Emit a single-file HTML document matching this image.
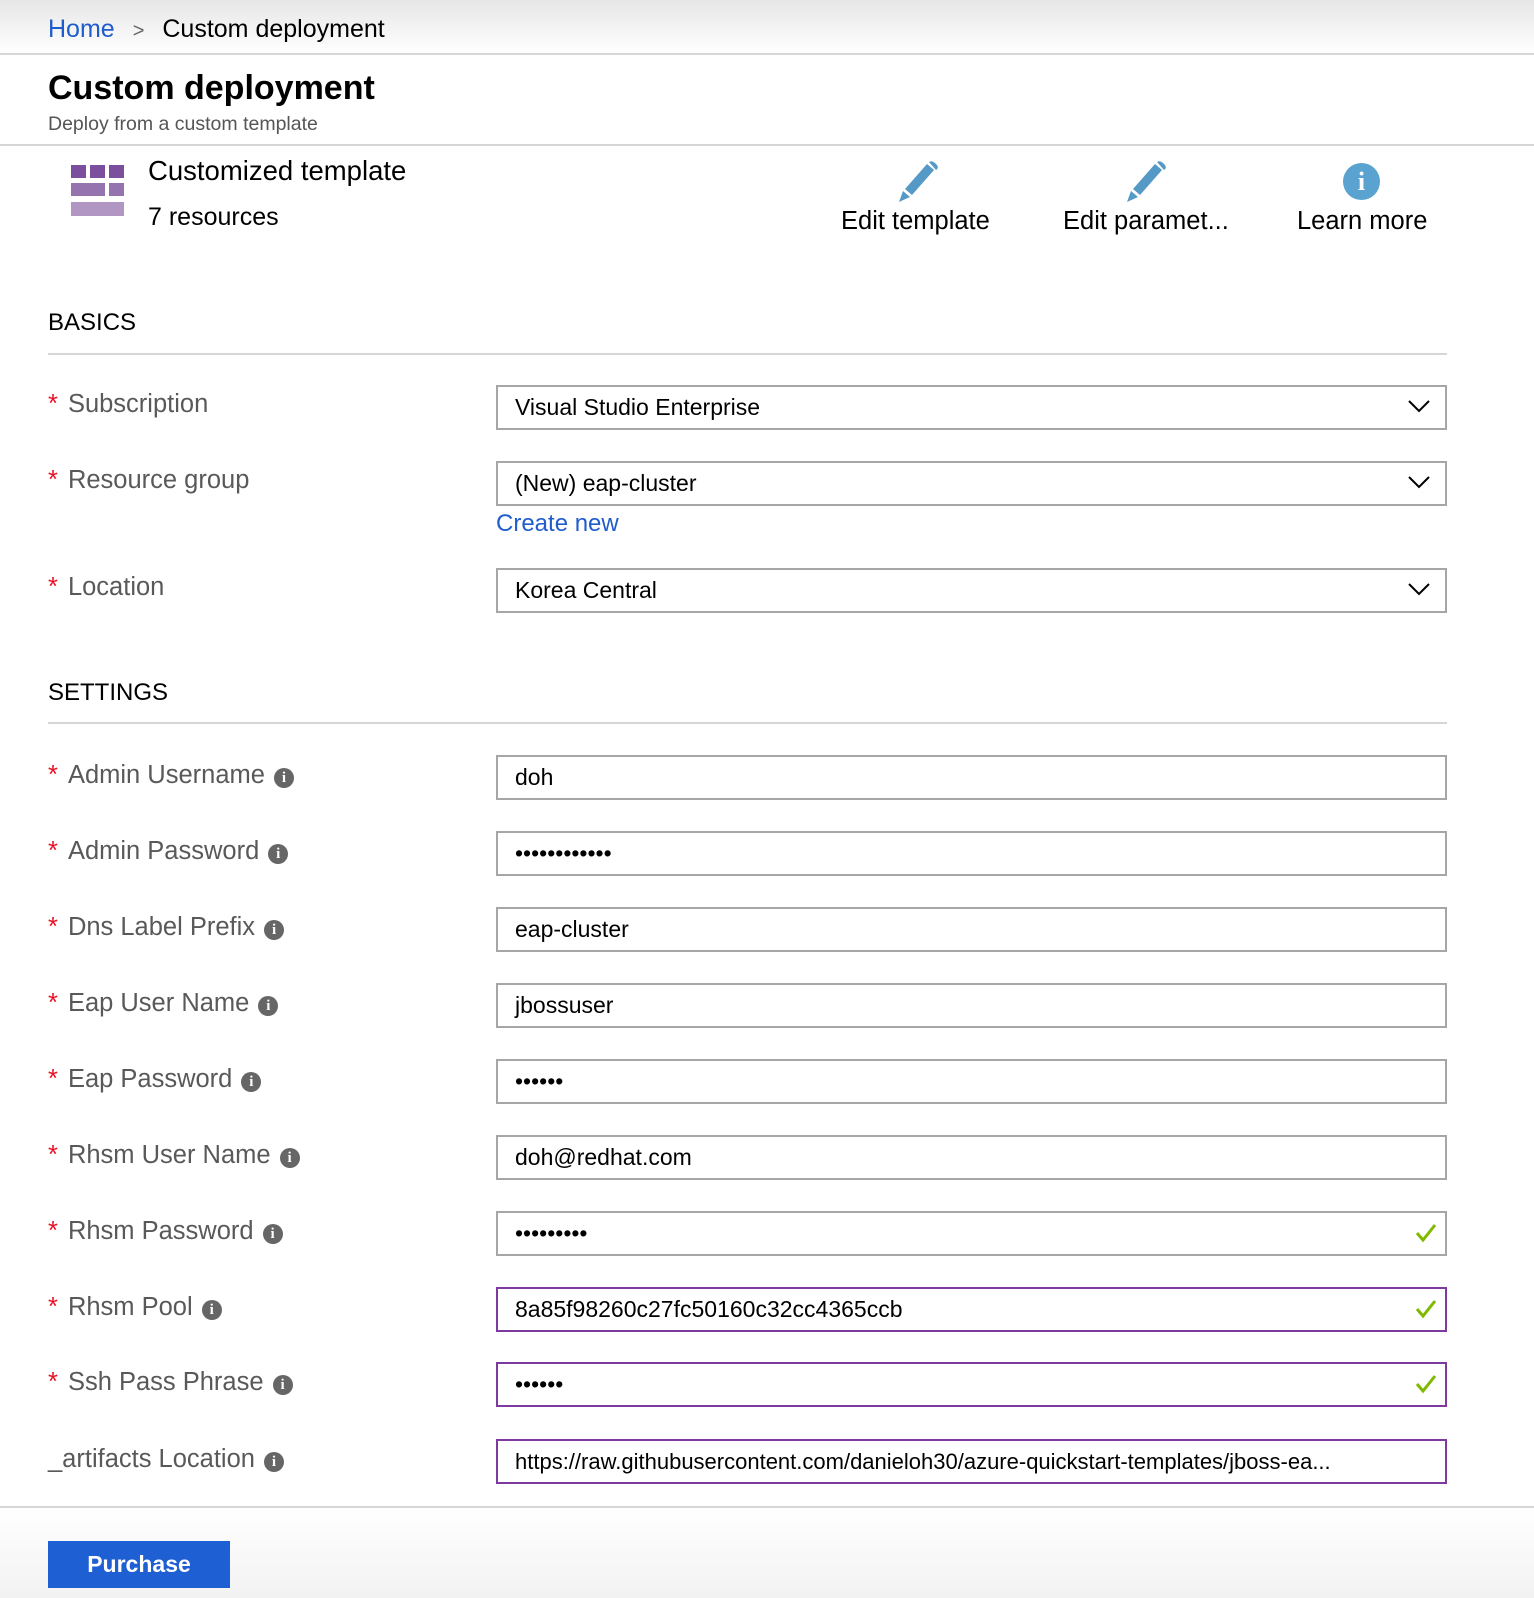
<!DOCTYPE html>
<html><head><meta charset="utf-8"><style>
*{margin:0;padding:0;box-sizing:border-box}
body{width:1534px;height:1598px;position:relative;background:#fff;font-family:"Liberation Sans",sans-serif;overflow:hidden;color:#000}
.a{position:absolute;white-space:nowrap}
.top{position:absolute;left:0;top:0;width:1534px;height:55px;background:linear-gradient(#e6e6e6,#fff);border-bottom:2px solid #d6d6d6}
.hr{position:absolute;height:2px;background:#d6d6d6}
.lbl{position:absolute;left:48px;font-size:25.5px;color:#595959;line-height:30px;white-space:nowrap}
.lbl .s{color:#e81123;margin-right:10px}
.i{display:inline-block;width:20px;height:20px;border-radius:50%;background:#666;color:#fff;font:bold 15px/20px "Liberation Serif",serif;text-align:center;vertical-align:1px;margin-left:9px}
.in{position:absolute;left:496px;width:951px;height:45px;border:2px solid #a6a6a6;font-size:23px;line-height:41px;padding-left:17px;white-space:nowrap}
.p{border-color:#7e3a9e}
.chk{position:absolute;right:8px;top:9px}
.dd{position:absolute;right:14px;top:11px}
.sec{position:absolute;left:48px;font-size:24px;line-height:28px}
</style></head><body>
<div class="top"></div>
<div class="a" style="left:48px;top:14px;font-size:25px;line-height:30px"><span style="color:#1f5ccc">Home</span><span style="color:#666;margin:0 18px;font-size:20px">&gt;</span>Custom deployment</div>
<div class="a" style="left:48px;top:68px;font-size:34px;font-weight:bold;line-height:40px">Custom deployment</div>
<div class="a" style="left:48px;top:112px;font-size:19.5px;color:#555;line-height:24px">Deploy from a custom template</div>
<div class="hr" style="left:0;top:144px;width:1534px"></div>
<svg class="a" style="left:71px;top:165px" width="54" height="54">
<rect x="0" y="0" width="15" height="13" fill="#7b4f9d"/><rect x="19" y="0" width="15" height="13" fill="#7b4f9d"/><rect x="38" y="0" width="15" height="13" fill="#7b4f9d"/>
<rect x="0" y="18" width="34" height="13" fill="#9573ae"/><rect x="38" y="18" width="15" height="13" fill="#9573ae"/>
<rect x="0" y="37" width="53" height="14" fill="#b196c4"/></svg>
<div class="a" style="left:148px;top:155px;font-size:27.5px;line-height:32px">Customized template</div>
<div class="a" style="left:148px;top:202px;font-size:25px;line-height:30px">7 resources</div>
<svg class="a" style="left:897px;top:161px" width="42" height="42"><path d="M2 41 L6 30 L13 36 Z M8 28 L30 3 L37 9 L15 34 Z" fill="#5599c6"/><path d="M32 1 Q35 -1 38 2 L40 4 Q42 7 39 9 Z" fill="#5599c6"/></svg>
<svg class="a" style="left:1125px;top:161px" width="42" height="42"><path d="M2 41 L6 30 L13 36 Z M8 28 L30 3 L37 9 L15 34 Z" fill="#5599c6"/><path d="M32 1 Q35 -1 38 2 L40 4 Q42 7 39 9 Z" fill="#5599c6"/></svg>
<div class="a" style="left:841px;top:206px;font-size:25.5px;line-height:30px">Edit template</div>
<div class="a" style="left:1063px;top:206px;font-size:25.5px;line-height:30px">Edit paramet...</div>
<div class="a" style="left:1297px;top:206px;font-size:25.5px;line-height:30px">Learn more</div>
<div class="a" style="left:1343px;top:163px;width:37px;height:37px;border-radius:50%;background:#5aa3d1;color:#fff;font:bold 26px/37px 'Liberation Serif',serif;text-align:center">i</div>

<div class="sec" style="top:309px">BASICS</div>
<div class="hr" style="left:48px;top:353px;width:1399px"></div>
<div class="lbl" style="top:389px"><span class="s">*</span>Subscription</div>
<div class="in" style="top:385px">Visual Studio Enterprise<svg class="dd" width="24" height="16"><path d="M2 3 L12 13 L22 3" stroke="#000" stroke-width="2" fill="none"/></svg></div>
<div class="lbl" style="top:465px"><span class="s">*</span>Resource group</div>
<div class="in" style="top:461px">(New) eap-cluster<svg class="dd" width="24" height="16"><path d="M2 3 L12 13 L22 3" stroke="#000" stroke-width="2" fill="none"/></svg></div>
<div class="a" style="left:496px;top:509px;font-size:24px;color:#1f5ccc;line-height:30px">Create new</div>
<div class="lbl" style="top:572px"><span class="s">*</span>Location</div>
<div class="in" style="top:568px">Korea Central<svg class="dd" width="24" height="16"><path d="M2 3 L12 13 L22 3" stroke="#000" stroke-width="2" fill="none"/></svg></div>

<div class="sec" style="top:679px">SETTINGS</div>
<div class="hr" style="left:48px;top:722px;width:1399px"></div>

<div class="lbl" style="top:760px"><span class="s">*</span>Admin Username<span class="i">i</span></div>
<div class="in" style="top:755px">doh</div>
<div class="lbl" style="top:836px"><span class="s">*</span>Admin Password<span class="i">i</span></div>
<div class="in" style="top:831px">••••••••••••</div>
<div class="lbl" style="top:912px"><span class="s">*</span>Dns Label Prefix<span class="i">i</span></div>
<div class="in" style="top:907px">eap-cluster</div>
<div class="lbl" style="top:988px"><span class="s">*</span>Eap User Name<span class="i">i</span></div>
<div class="in" style="top:983px">jbossuser</div>
<div class="lbl" style="top:1064px"><span class="s">*</span>Eap Password<span class="i">i</span></div>
<div class="in" style="top:1059px">••••••</div>
<div class="lbl" style="top:1140px"><span class="s">*</span>Rhsm User Name<span class="i">i</span></div>
<div class="in" style="top:1135px">doh@redhat.com</div>
<div class="lbl" style="top:1216px"><span class="s">*</span>Rhsm Password<span class="i">i</span></div>
<div class="in" style="top:1211px">•••••••••<svg class="chk" width="22" height="22"><path d="M2 11 L8 18 L20 3" stroke="#7fba00" stroke-width="3" fill="none"/></svg></div>
<div class="lbl" style="top:1292px"><span class="s">*</span>Rhsm Pool<span class="i">i</span></div>
<div class="in p" style="top:1287px">8a85f98260c27fc50160c32cc4365ccb<svg class="chk" width="22" height="22"><path d="M2 11 L8 18 L20 3" stroke="#7fba00" stroke-width="3" fill="none"/></svg></div>
<div class="lbl" style="top:1367px"><span class="s">*</span>Ssh Pass Phrase<span class="i">i</span></div>
<div class="in p" style="top:1362px">••••••<svg class="chk" width="22" height="22"><path d="M2 11 L8 18 L20 3" stroke="#7fba00" stroke-width="3" fill="none"/></svg></div>
<div class="lbl" style="top:1444px">_artifacts Location<span class="i">i</span></div>
<div class="in p" style="top:1439px;font-size:22px">https://raw.githubusercontent.com/danieloh30/azure-quickstart-templates/jboss-ea...</div>

<div class="a" style="left:0;top:1506px;width:1534px;height:92px;background:linear-gradient(#fff,#f2f2f2);border-top:2px solid #d6d6d6"></div>
<div class="a" style="left:48px;top:1541px;width:182px;height:47px;background:#1f5fd4;color:#fff;font-size:23px;font-weight:bold;line-height:47px;text-align:center">Purchase</div>
</body></html>
